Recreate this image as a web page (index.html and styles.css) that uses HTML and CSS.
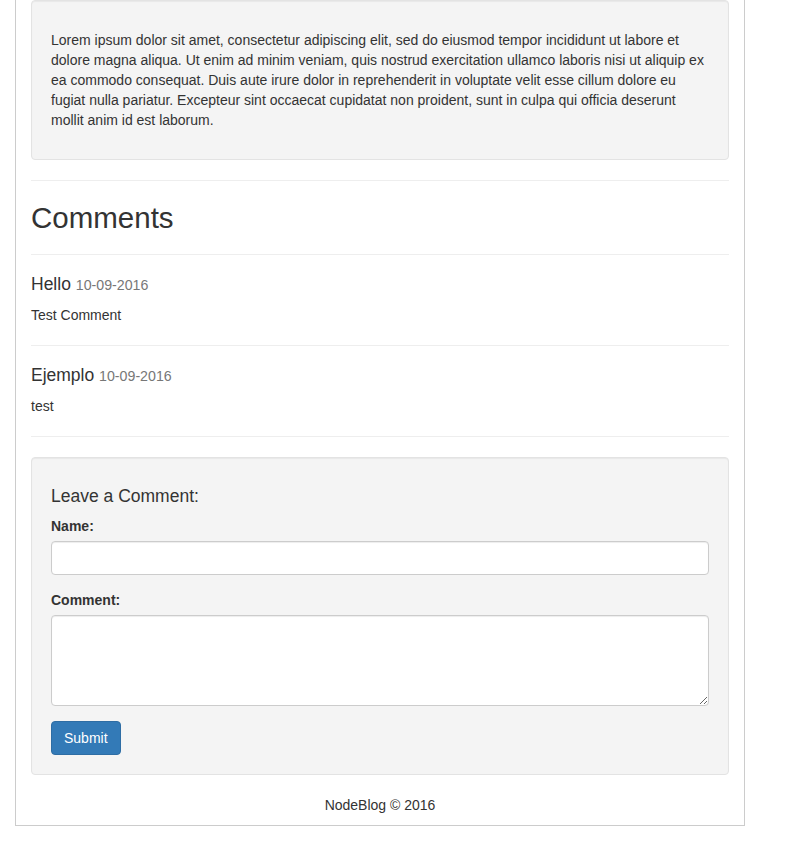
FILE: index.html
```html
<!DOCTYPE html>
<html>
<head>
<meta charset="utf-8">
<title>NodeBlog</title>
<link rel="stylesheet" href="styles.css">
</head>
<body>
<div class="container">
  <div class="well post-body">
    <p>Lorem ipsum dolor sit amet, consectetur adipiscing elit, sed do eiusmod tempor incididunt ut labore et dolore magna aliqua. Ut enim ad minim veniam, quis nostrud exercitation ullamco laboris nisi ut aliquip ex ea commodo consequat. Duis aute irure dolor in reprehenderit in voluptate velit esse cillum dolore eu fugiat nulla pariatur. Excepteur sint occaecat cupidatat non proident, sunt in culpa qui officia deserunt mollit anim id est laborum.</p>
  </div>
  <hr class="divider">
  <h2 class="comments-title">Comments</h2>
  <hr class="divider">
  <div class="comment">
    <h4 class="comment-name">Hello <span class="comment-date">10-09-2016</span></h4>
    <p class="comment-text">Test Comment</p>
  </div>
  <hr class="divider">
  <div class="comment">
    <h4 class="comment-name">Ejemplo <span class="comment-date">10-09-2016</span></h4>
    <p class="comment-text">test</p>
  </div>
  <hr class="divider">
  <form class="well comment-form">
    <h4 class="form-title">Leave a Comment:</h4>
    <div class="form-group">
      <label class="form-label" for="name">Name:</label>
      <input class="form-control" type="text" id="name" name="name">
    </div>
    <div class="form-group">
      <label class="form-label" for="body">Comment:</label>
      <textarea class="form-control form-textarea" id="body" name="body"></textarea>
    </div>
    <button type="button" class="btn-primary">Submit</button>
  </form>
  <footer class="footer">
    <p class="footer-text">NodeBlog &copy; 2016</p>
  </footer>
</div>
</body>
</html>
```

FILE: styles.css
```css
* {
  box-sizing: border-box;
}

html, body {
  margin: 0;
  padding: 0;
  background: #fff;
}

body {
  font-family: "Liberation Sans", Arial, Helvetica, sans-serif;
  font-size: 14px;
  line-height: 1.42857143;
  color: #333;
}

.container {
  margin-left: 15px;
  width: 730px;
  padding: 0 15px 10px;
  border-left: 1px solid #ccc;
  border-right: 1px solid #ccc;
  border-bottom: 1px solid #ccc;
}

.well {
  background: #f4f4f4;
  border: 1px solid #e3e3e3;
  border-radius: 4px;
  padding: 19px;
  margin: 0 0 20px;
  box-shadow: inset 0 1px 1px rgba(0, 0, 0, 0.05);
}

.post-body p {
  margin: 10px 0;
}

.divider {
  margin: 20px 0;
  border: 0;
  border-top: 1px solid #eee;
  height: 0;
}

.comments-title {
  font-size: 29.5px;
  font-weight: 500;
  line-height: 33px;
  margin: 20px 0 10px;
}

.comment-name,
.form-title {
  font-size: 17.5px;
  font-weight: 500;
  line-height: 19.8px;
  height: 19.8px;
  margin: 10px 0 10px;
}

.comment-date {
  font-size: 14.2px;
  line-height: 1;
  color: #777;
  font-weight: 400;
}

.comment-text {
  margin: 0 0 10px;
}

.form-group {
  margin-bottom: 15px;
}

.form-label {
  display: inline-block;
  font-weight: 700;
  margin-bottom: 5px;
}

.form-control {
  display: block;
  width: 100%;
  height: 34px;
  padding: 6px 12px;
  font-family: inherit;
  font-size: 14px;
  line-height: 1.42857143;
  color: #555;
  background: #fff;
  border: 1px solid #ccc;
  border-radius: 4px;
  box-shadow: inset 0 1px 1px rgba(0, 0, 0, 0.075);
  margin: 0;
}

.form-textarea {
  height: 91px;
  resize: vertical;
}

.btn-primary {
  display: inline-block;
  font-family: inherit;
  font-size: 14px;
  line-height: 1.42857143;
  padding: 6px 12px;
  color: #fff;
  background: #337ab7;
  border: 1px solid #2e6da4;
  border-radius: 4px;
  margin: 0;
  vertical-align: top;
}

.footer {
  text-align: center;
}

.footer-text {
  margin: 0;
}
```
